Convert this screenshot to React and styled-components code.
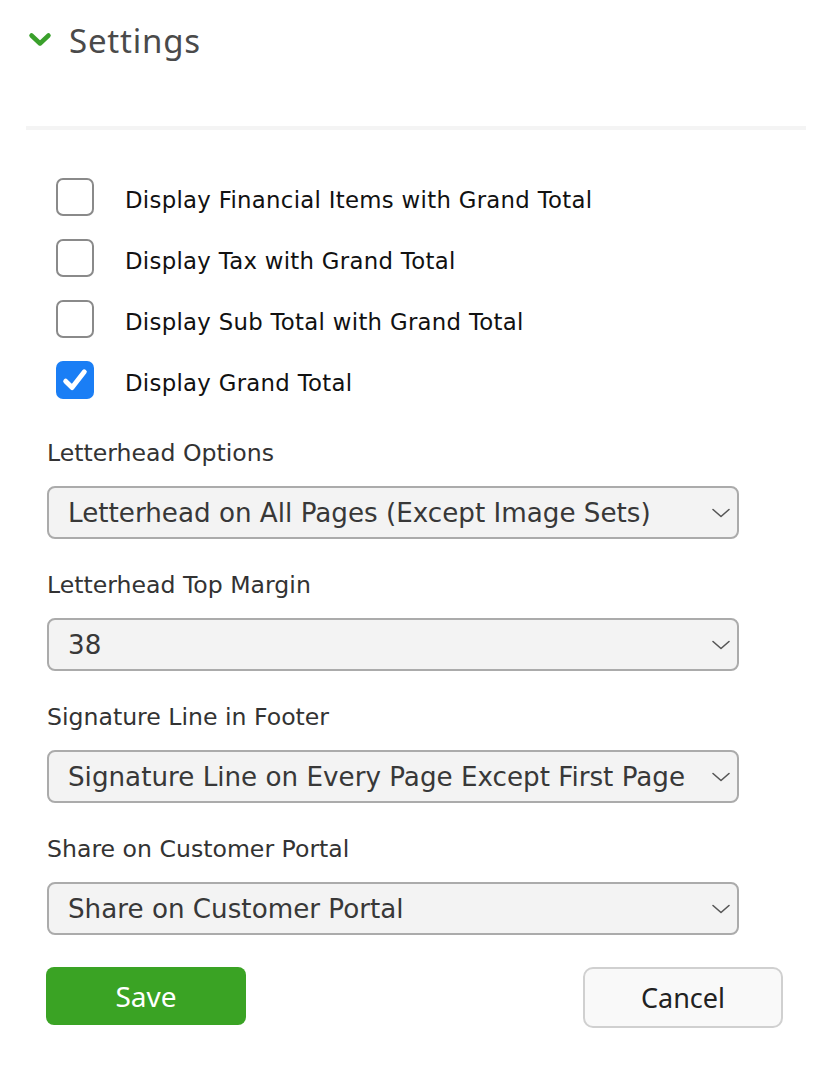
import styled, { createGlobalStyle } from "styled-components"

const GlobalStyle = createGlobalStyle`
  html, body {
    margin: 0;
    padding: 0;
    background: #ffffff;
  }
`

const Page = styled.div`
  width: 828px;
  min-height: 1078px;
  box-sizing: border-box;
  padding: 20px 22px 0 26px;
  font-family: "DejaVu Sans", Verdana, sans-serif;
`

const Header = styled.div`
  display: flex;
  align-items: center;
  gap: 17px;
  padding-left: 2px;
  height: 40px;
`

const Title = styled.h2`
  margin: 0;
  font-family: "Noto Sans", "Open Sans", sans-serif;
  font-weight: 400;
  font-size: 33px;
  color: #4a4a4a;
  letter-spacing: 0.8px;
`

const Divider = styled.hr`
  margin: 66px 0 0;
  border: none;
  height: 4px;
  background: #f4f4f4;
`

const Body = styled.div`
  padding: 48px 23px 0 21px;
  display: flex;
  flex-direction: column;
`

const CheckList = styled.div`
  display: flex;
  flex-direction: column;
  gap: 23px;
  padding-left: 9px;
`

const CheckRow = styled.label`
  display: flex;
  align-items: center;
  gap: 31px;
  font-size: 22.8px;
  letter-spacing: 0.3px;
  color: #111;
  height: 38px;

  span.text {
    padding-top: 5px;
  }
`

const Box = styled.span`
  width: 38px;
  height: 38px;
  box-sizing: border-box;
  border-radius: 7px;
  border: ${(p) => (p.$checked ? "none" : "2px solid #8a8a8a")};
  background: ${(p) => (p.$checked ? "#1a7ef5" : "#fff")};
  display: flex;
  align-items: center;
  justify-content: center;
  flex: 0 0 auto;
`

const Field = styled.div`
  display: flex;
  flex-direction: column;
  margin-top: ${(p) => p.$top}px;
  margin-right: 44px;
`

const FieldLabel = styled.div`
  font-size: 23.6px;
  color: #333;
  height: 32px;
  line-height: 32px;
  margin-bottom: 17px;
`

const Select = styled.div`
  height: 53px;
  box-sizing: border-box;
  border: 2px solid #ababab;
  border-radius: 8px;
  background: #f3f3f3;
  display: flex;
  align-items: center;
  justify-content: space-between;
  padding: 0 6px 0 19px;
  font-size: 26.2px;
  color: #383838;
  white-space: nowrap;
`

const Actions = styled.div`
  display: flex;
  justify-content: space-between;
  align-items: flex-start;
  margin-top: 32px;
`

const Button = styled.button`
  width: 200px;
  height: ${(p) => (p.$primary ? 58 : 61)}px;
  box-sizing: border-box;
  border-radius: ${(p) => (p.$primary ? 8 : 10)}px;
  border: ${(p) => (p.$primary ? "none" : "2px solid #d0d0d0")};
  background: ${(p) => (p.$primary ? "#3aa324" : "#f9f9f9")};
  color: ${(p) => (p.$primary ? "#fff" : "#222")};
  font-family: "Noto Sans", "Open Sans", sans-serif;
  font-size: ${(p) => (p.$primary ? 28 : 27)}px;
  padding: 0;
  ${(p) => (p.$primary ? "margin-left: -1px;" : "")}
`

const HeaderChevron = () => (
  <svg width="24" height="16" viewBox="0 0 24 16" fill="none" stroke="#3aa02c" strokeWidth="4.5" strokeLinecap="round" strokeLinejoin="round">
    <polyline points="3.5 3.5 12 11.5 20.5 3.5" />
  </svg>
)

const SelectChevron = () => (
  <svg width="20" height="12" viewBox="0 0 20 12" fill="none" stroke="#555" strokeWidth="1.6" strokeLinecap="round" strokeLinejoin="round">
    <polyline points="2 2.5 10 9.5 18 2.5" />
  </svg>
)

const Check = () => (
  <svg width="28" height="28" viewBox="0 0 24 24" fill="none" stroke="#fff" strokeWidth="4.2" strokeLinecap="round" strokeLinejoin="round">
    <polyline points="4 13 9.5 18.5 20 5" />
  </svg>
)

const checks = [
  { label: "Display Financial Items with Grand Total", checked: false },
  { label: "Display Tax with Grand Total", checked: false },
  { label: "Display Sub Total with Grand Total", checked: false },
  { label: "Display Grand Total", checked: true },
]

const fields = [
  { label: "Letterhead Options", value: "Letterhead on All Pages (Except Image Sets)" },
  { label: "Letterhead Top Margin", value: "38" },
  { label: "Signature Line in Footer", value: "Signature Line on Every Page Except First Page" },
  { label: "Share on Customer Portal", value: "Share on Customer Portal" },
]

export default function App() {
  return (
    <>
      <GlobalStyle />
      <Page>
        <Header>
          <HeaderChevron />
          <Title>Settings</Title>
        </Header>
        <Divider />
        <Body>
          <CheckList>
            {checks.map((c) => (
              <CheckRow key={c.label}>
                <Box $checked={c.checked}>{c.checked && <Check />}</Box>
                <span className="text">{c.label}</span>
              </CheckRow>
            ))}
          </CheckList>
          {fields.map((f, i) => (
            <Field key={f.label} $top={i === 0 ? 38 : 30}>
              <FieldLabel>{f.label}</FieldLabel>
              <Select>
                <span>{f.value}</span>
                <SelectChevron />
              </Select>
            </Field>
          ))}
          <Actions>
            <Button $primary>Save</Button>
            <Button>Cancel</Button>
          </Actions>
        </Body>
      </Page>
    </>
  )
}
